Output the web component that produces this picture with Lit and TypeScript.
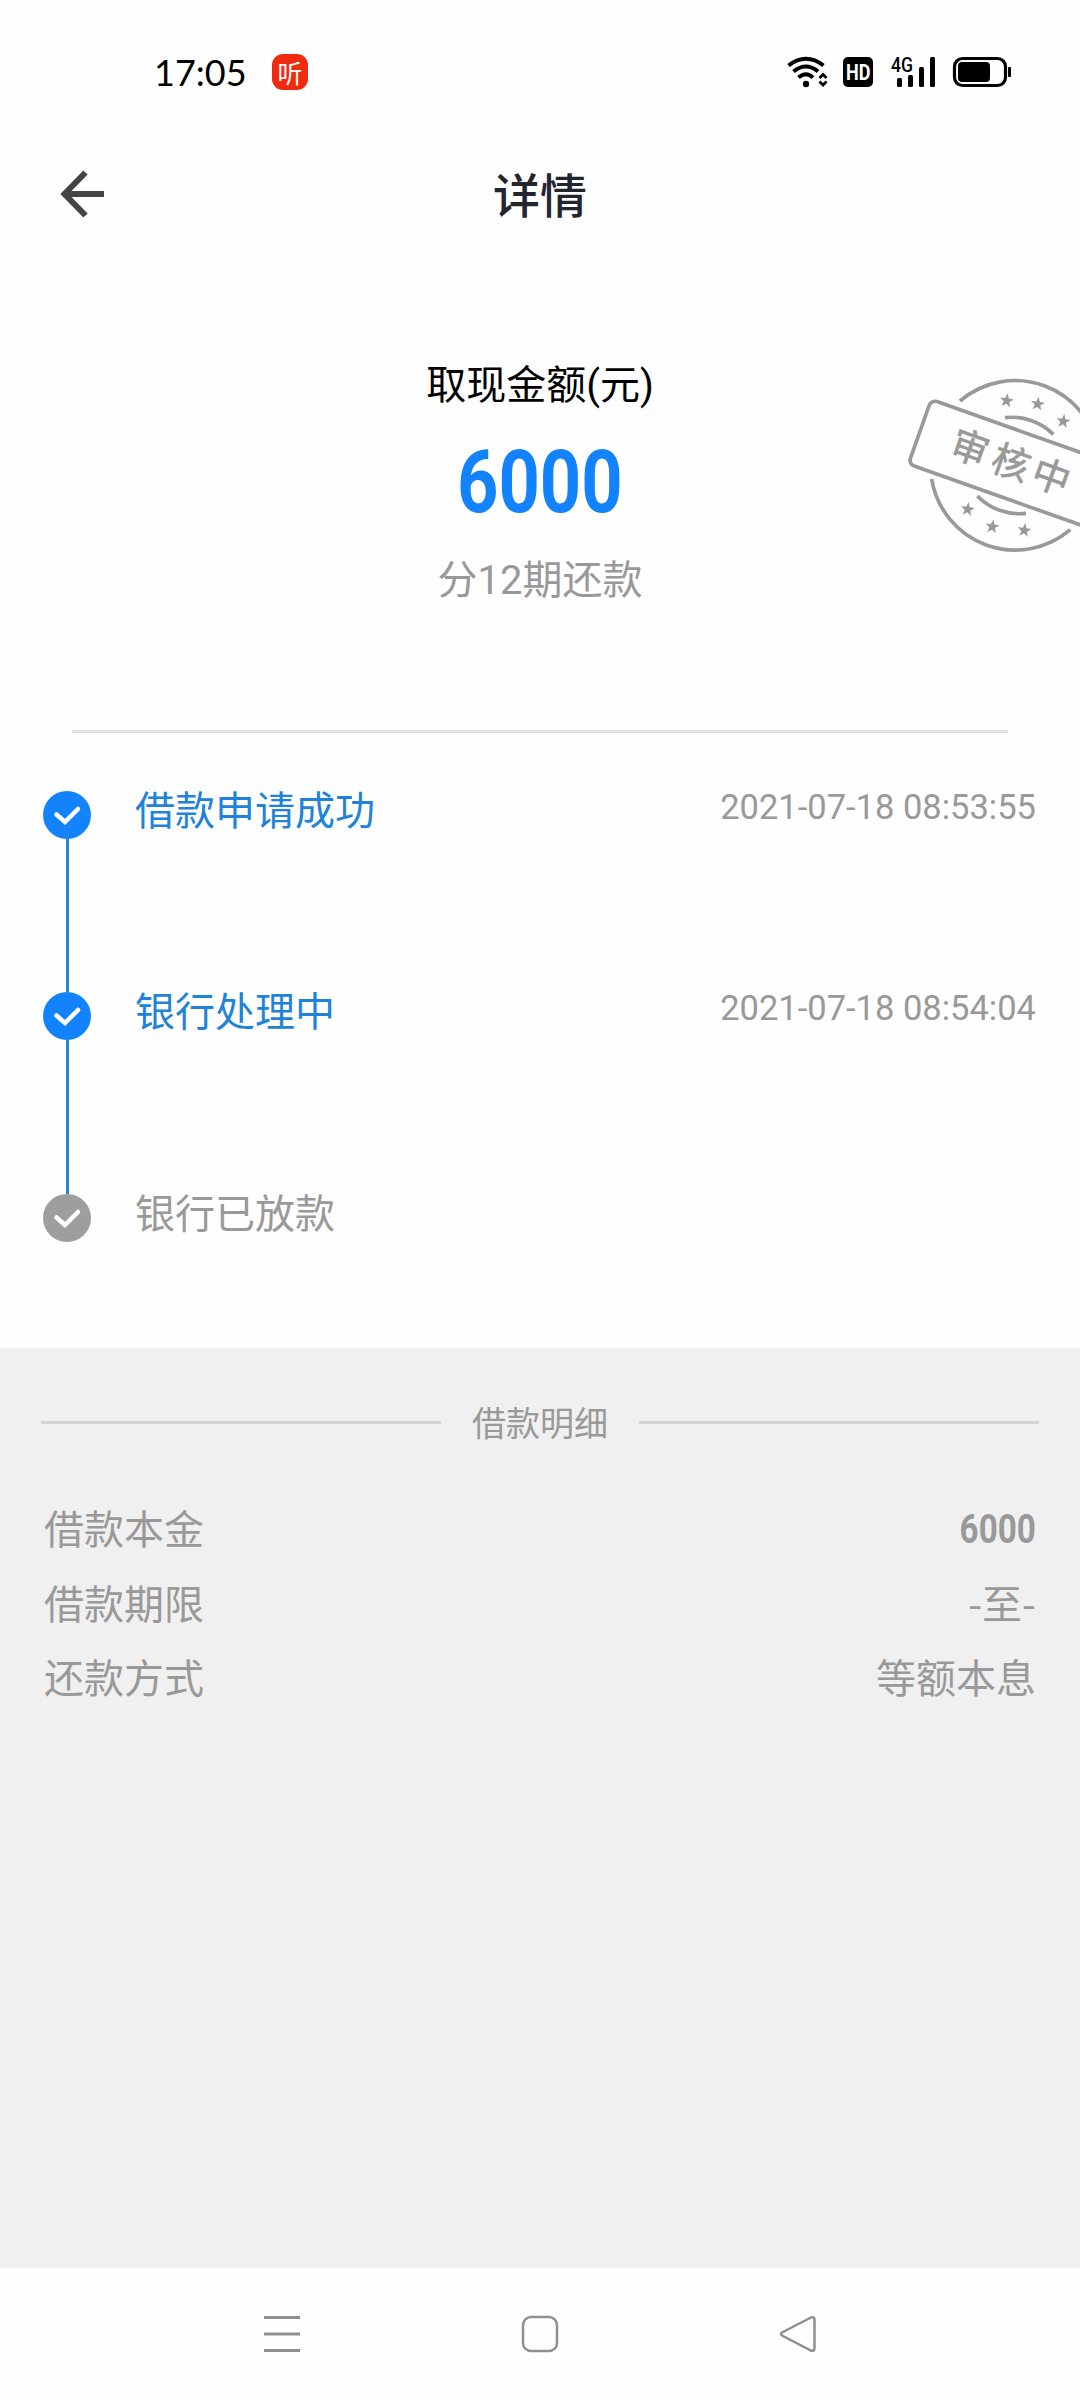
import { LitElement, html, css, svg } from 'lit';
import { customElement, property } from 'lit/decorators.js';


@customElement('status-bar')
class StatusBar extends LitElement {
  static styles = css`
    :host {
      display: flex;
      align-items: center;
      height: 144px;
      box-sizing: border-box;
      padding: 0 69px 0 154px;
      color: #000;
    }

    .time {
      width: 118px;
      font: 400 36px/44px Lato, sans-serif;
    }

    .badge {
      display: flex;
      align-items: center;
      justify-content: center;
      width: 36px;
      height: 36px;
      border-radius: 11px;
      background: #f02b10;
      color: #fff;
      font: 400 25px/34px "Noto Sans CJK SC", sans-serif;
    }

    .icons {
      display: block;
      margin-left: auto;
    }

    .network {
      font: 500 20px Roboto, sans-serif;
    }

    .hd {
      font: 700 22px Roboto, sans-serif;
      fill: #fff;
    }
  `;

  render () {
    return html`
      <div class="time">17:05</div>
      <div class="badge">听</div>
      <svg class="icons" width="224" height="50" viewBox="0 -10 224 50">
        <g fill="none" stroke="#000" stroke-width="4">
          <path d="M1.5 8.5 Q19 -5 36.500 8.500"/>
          <path d="M6.500 14.500 Q19 4.500 31 14.500"/>
          <path d="M11.500 20.500 Q19 14 26 20.500"/>
          <path d="M32.500 21 L36 17.500 L39.500 21 M32.500 24.500 L36 28 L39.500 24.500" stroke-width="2.800"/>
        </g>
        <circle cx="19" cy="27" r="3.200"/>
        <rect x="56" y="0" width="30" height="30" rx="5"/>
        <text class="hd" x="59" y="23" textLength="24.500" lengthAdjust="spacingAndGlyphs">HD</text>
        <text class="network" x="104" y="15" textLength="22" lengthAdjust="spacingAndGlyphs">4G</text>
        <rect x="110" y="21" width="5" height="9" rx="1.500"/>
        <rect x="121" y="18" width="5" height="12" rx="1.500"/>
        <rect x="132" y="10" width="5" height="20" rx="1.500"/>
        <rect x="143" y="0" width="5" height="30" rx="1.500"/>
        <rect x="167.500" y="1.500" width="51" height="27" rx="8" fill="none" stroke="#000" stroke-width="3.200"/>
        <rect x="171" y="5" width="32" height="20" rx="4"/>
        <rect x="221" y="10" width="3" height="10" rx="1"/>
      </svg>
    `;
  }
}


@customElement('review-stamp')
class ReviewStamp extends LitElement {
  static styles = css`
    :host {
      display: block;
    }

    svg {
      display: block;
    }

    text {
      font: 400 113px "Noto Sans CJK SC", sans-serif;
      text-anchor: middle;
      stroke: #999;
      stroke-width: 2;
    }
  `;

  _stars = [[350, 122], [443, 132], [520, 184], [233, 448], [307, 500], [403, 511]];

  render () {
    return html`
      <svg width="190" height="210" viewBox="0 0 570 630" fill="#999">
        <g fill="none" stroke="#999" stroke-width="11">
          <path d="M210 123 A254 254 0 0 1 627 280"/>
          <path d="M125 357 A254 254 0 0 0 541 509"/>
          <path d="M345 173 A175 175 0 0 1 490 223"/>
          <path d="M262 408 A175 175 0 0 0 408 460"/>
        </g>
        ${this._stars.map(([x, y]) => svg`
          <path
            transform="translate(${x} ${y}) rotate(8)"
            d="M0 -22 L5.500 -7 L21 -6.800 L8.500 3 L13 18 L0 9 L-13 18 L-8.500 3 L-21 -6.800 L-5.500 -7 Z"
          />
        `)}
        <g transform="translate(375 317) rotate(19.5)">
          <rect x="-303" y="-103" width="606" height="205" rx="18" fill="none" stroke="#999" stroke-width="11"/>
          <text x="-145" y="36">审</text>
          <text x="-14" y="36">核</text>
          <text x="114" y="36">中</text>
        </g>
      </svg>
    `;
  }
}


@customElement('loan-step')
class LoanStep extends LitElement {
  @property() label = '';
  @property() time = '';
  @property({ type: Boolean, reflect: true }) done = false;
  @property({ type: Boolean, reflect: true }) last = false;

  static styles = css`
    :host {
      display: flex;
      height: 201.5px;
      color: #999;
    }

    :host([last]) {
      height: 48px;
    }

    .rail {
      display: flex;
      flex-direction: column;
      align-items: center;
      width: 48px;
      margin-right: 44px;
    }

    .dot {
      display: block;
      flex: none;
      fill: #9e9e9e;
    }

    :host([done]) .dot {
      fill: #1283fd;
    }

    .line {
      flex: 1;
      width: 3px;
      margin-left: 1px;
      background: #2585cf;
    }

    :host([last]) .line {
      display: none;
    }

    .label {
      flex: 1;
      font-size: 40px;
      line-height: 42px;
    }

    :host([done]) .label {
      color: #1f83da;
    }

    .time {
      font-size: 34.5px;
      line-height: 32px;
    }
  `;

  render () {
    return html`
      <div class="rail">
        <svg class="dot" width="48" height="48" viewBox="0 0 48 48">
          <circle cx="24" cy="24" r="24"/>
          <path d="M13.500 23.500 L22 31 L35 18" fill="none" stroke="#fff" stroke-width="4.500" stroke-linecap="round"/>
        </svg>
        <div class="line"></div>
      </div>
      <div class="label">${this.label}</div>
      <div class="time">${this.time}</div>
    `;
  }
}


@customElement('app-root')
class AppRoot extends LitElement {
  static styles = css`
    :host {
      display: flex;
      flex-direction: column;
      width: 1080px;
      height: 2400px;
      overflow: hidden;
      background: #fefefe;
      font-family: Roboto, "Noto Sans CJK SC", sans-serif;
      color: #999;
    }

    .header {
      display: grid;
      grid-template-columns: 1fr auto 1fr;
      align-items: center;
      height: 100px;
      padding: 0 60px;
    }

    .title {
      padding-top: 5px;
      font-size: 47px;
      line-height: 60px;
      font-weight: 500;
      color: #22252f;
    }

    .summary {
      position: relative;
      display: flex;
      flex-direction: column;
      align-items: center;
      height: 486px;
      box-sizing: border-box;
      padding-top: 114px;
    }

    .caption {
      font-size: 40px;
      line-height: 56px;
      color: #000;
    }

    .amount {
      margin: 28px 0 31px;
      font-size: 87px;
      line-height: 80px;
      font-weight: 700;
      color: #1283fd;
      transform: scaleX(0.83);
    }

    .terms {
      font-size: 40px;
      line-height: 56px;
    }

    /* the stamp hangs over the right edge of the summary */
    .stamp {
      position: absolute;
      top: 116px;
      right: 0;
    }

    .divider {
      height: 3px;
      margin: 0 72px;
      background: #e0e0e0;
    }

    .steps {
      height: 615px;
      box-sizing: border-box;
      padding: 57.5px 44px 0 43px;
    }

    .details {
      flex: 1;
      padding: 48px 44px 0;
      background: #f0f0f0;
    }

    .section {
      display: flex;
      align-items: center;
      gap: 31px;
      height: 52px;
      margin: 0 -3px 52px;
      font-size: 34px;
      line-height: 52px;
    }

    .section span {
      padding-top: 3px;
    }

    .section::before,
    .section::after {
      content: '';
      flex: 1;
      height: 3px;
      background: #d5d5d5;
    }

    .row {
      display: flex;
      justify-content: space-between;
      height: 74.5px;
      font-family: "Noto Sans CJK SC", sans-serif;
      font-size: 40px;
      line-height: 54px;
    }

    .number {
      font-family: Roboto, sans-serif;
      font-weight: 700;
      line-height: 59px;
      transform: scaleX(0.83);
      transform-origin: right;
    }

    .nav {
      display: flex;
      align-items: center;
      justify-content: space-between;
      height: 132px;
      box-sizing: border-box;
      padding: 0 263px;
    }

    .nav svg {
      display: block;
      fill: none;
      stroke: #8f8f8f;
      stroke-width: 2.5;
    }
  `;

  _details = [
    { label: '借款本金', value: '6000', number: true },
    { label: '借款期限', value: '-至-' },
    { label: '还款方式', value: '等额本息' }
  ];

  render () {
    return html`
      <status-bar></status-bar>

      <div class="header">
        <svg width="46" height="48" viewBox="0 0 46 48" fill="none" stroke="#444" stroke-width="6">
          <path d="M25.500 2.500 L4.500 24 L25.500 45.500 M4.500 24 H44"/>
        </svg>
        <div class="title">详情</div>
      </div>

      <div class="summary">
        <div class="caption">取现金额(元)</div>
        <div class="amount">6000</div>
        <div class="terms">分12期还款</div>
        <review-stamp class="stamp"></review-stamp>
      </div>

      <div class="divider"></div>

      <div class="steps">
        <loan-step done label="借款申请成功" time="2021-07-18 08:53:55"></loan-step>
        <loan-step done label="银行处理中" time="2021-07-18 08:54:04"></loan-step>
        <loan-step last label="银行已放款"></loan-step>
      </div>

      <div class="details">
        <div class="section"><span>借款明细</span></div>
        ${this._details.map(row => html`
          <div class="row">
            <span>${row.label}</span>
            <span class=${row.number ? 'number' : ''}>${row.value}</span>
          </div>
        `)}
      </div>

      <div class="nav">
        <svg width="38" height="38" viewBox="0 0 38 38">
          <path d="M1 2.500 H37 M1 19 H37 M1 35.500 H37" stroke-width="3"/>
        </svg>
        <svg width="38" height="38" viewBox="0 0 38 38">
          <rect x="2" y="2" width="34" height="34" rx="8"/>
        </svg>
        <svg width="38" height="38" viewBox="0 0 38 38">
          <path d="M32 2.500 L3 17.500 Q1 19 3 20.500 L32 35.500 Q35.500 36.500 35.500 33 V5 Q35.500 1.500 32 2.500 Z"/>
        </svg>
      </div>
    `;
  }
}
